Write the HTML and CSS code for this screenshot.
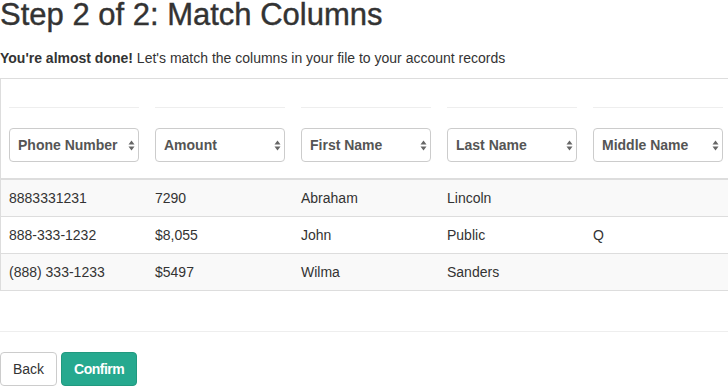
FILE: index.html
```html
<!DOCTYPE html>
<html lang="en">
<head>
    <meta charset="UTF-8">
    <meta name="viewport" content="width=device-width, initial-scale=1.0">
    <title>Match Columns</title>
    <link rel="stylesheet" href="styles.css">
</head>
<body>
    <h1>Step 2 of 2: Match Columns</h1>
    <p class="lead-text"><strong>You're almost done!</strong> Let's match the columns in your file to your account records</p>

    <div class="table-wrap">
        <table class="match-table">
            <thead>
                <tr>
                    <th>
                        <div class="col-label"></div>
                        <div class="select-box">
                            <select><option>Phone Number</option></select>
                            <svg class="caret" width="7" height="11" viewBox="0 0 7 11"><path d="M3.5 0.5 L6.5 4.5 L0.5 4.5 Z M3.5 10.5 L6.5 6.5 L0.5 6.5 Z" fill="#666"/></svg>
                        </div>
                    </th>
                    <th>
                        <div class="col-label"></div>
                        <div class="select-box">
                            <select><option>Amount</option></select>
                            <svg class="caret" width="7" height="11" viewBox="0 0 7 11"><path d="M3.5 0.5 L6.5 4.5 L0.5 4.5 Z M3.5 10.5 L6.5 6.5 L0.5 6.5 Z" fill="#666"/></svg>
                        </div>
                    </th>
                    <th>
                        <div class="col-label"></div>
                        <div class="select-box">
                            <select><option>First Name</option></select>
                            <svg class="caret" width="7" height="11" viewBox="0 0 7 11"><path d="M3.5 0.5 L6.5 4.5 L0.5 4.5 Z M3.5 10.5 L6.5 6.5 L0.5 6.5 Z" fill="#666"/></svg>
                        </div>
                    </th>
                    <th>
                        <div class="col-label"></div>
                        <div class="select-box">
                            <select><option>Last Name</option></select>
                            <svg class="caret" width="7" height="11" viewBox="0 0 7 11"><path d="M3.5 0.5 L6.5 4.5 L0.5 4.5 Z M3.5 10.5 L6.5 6.5 L0.5 6.5 Z" fill="#666"/></svg>
                        </div>
                    </th>
                    <th>
                        <div class="col-label"></div>
                        <div class="select-box">
                            <select><option>Middle Name</option></select>
                            <svg class="caret" width="7" height="11" viewBox="0 0 7 11"><path d="M3.5 0.5 L6.5 4.5 L0.5 4.5 Z M3.5 10.5 L6.5 6.5 L0.5 6.5 Z" fill="#666"/></svg>
                        </div>
                    </th>
                </tr>
            </thead>
            <tbody>
                <tr>
                    <td>8883331231</td>
                    <td>7290</td>
                    <td>Abraham</td>
                    <td>Lincoln</td>
                    <td></td>
                </tr>
                <tr>
                    <td>888-333-1232</td>
                    <td>$8,055</td>
                    <td>John</td>
                    <td>Public</td>
                    <td>Q</td>
                </tr>
                <tr>
                    <td>(888) 333-1233</td>
                    <td>$5497</td>
                    <td>Wilma</td>
                    <td>Sanders</td>
                    <td></td>
                </tr>
            </tbody>
        </table>
    </div>

    <hr>

    <div class="actions">
        <button class="btn btn-default">Back</button>
        <button class="btn btn-primary">Confirm</button>
    </div>
</body>
</html>
```

FILE: styles.css
```css
body {
    font-family: "Liberation Sans", Arial, sans-serif;
    font-size: 14px;
    line-height: 20px;
    color: #333;
    margin: 0;
    overflow: hidden;
}
h1 {
    font-size: 31px;
    font-weight: normal;
    line-height: 30px;
    margin: 0;
    -webkit-text-stroke: 0.4px #333;
}
.lead-text {
    margin: 18px 0 10px;
}
.table-wrap {
    width: max-content;
    border: 1px solid #ddd;
    margin-bottom: 40px;
    white-space: nowrap;
}
.match-table {
    border-collapse: separate;
    border-spacing: 0;
}
.match-table th,
.match-table td {
    width: 130px;
    padding: 8px;
    text-align: left;
    vertical-align: top;
}
.match-table th {
    border-bottom: 2px solid #ddd;
}
.match-table tbody tr + tr td {
    border-top: 1px solid #ddd;
}
.match-table tbody tr:nth-child(odd) {
    background-color: #f9f9f9;
}
.col-label {
    height: 20px;
    border-bottom: 1px solid #eee;
    margin-bottom: 20px;
}
.select-box {
    position: relative;
    margin-bottom: 8px;
}
.select-box select {
    appearance: none;
    -webkit-appearance: none;
    display: block;
    width: 130px;
    height: 34px;
    padding: 6px 8px;
    font-family: inherit;
    font-size: 14px;
    font-weight: bold;
    color: #555;
    background-color: #fff;
    border: 1px solid #ccc;
    border-radius: 4px;
}
.caret {
    position: absolute;
    right: 4px;
    top: 12px;
}
hr {
    border: 0;
    border-top: 1px solid #eee;
    margin: 20px 0;
}
.btn {
    font-family: inherit;
    font-size: 14px;
    line-height: 20px;
    padding: 6px 12px;
    border: 1px solid transparent;
    border-radius: 4px;
    cursor: pointer;
}
.btn-default {
    background-color: #fff;
    border-color: #ccc;
    color: #333;
}
.btn-primary {
    background-color: #26a98f;
    border-color: #21997f;
    color: #fff;
    font-weight: bold;
    letter-spacing: -0.5px;
}
```
